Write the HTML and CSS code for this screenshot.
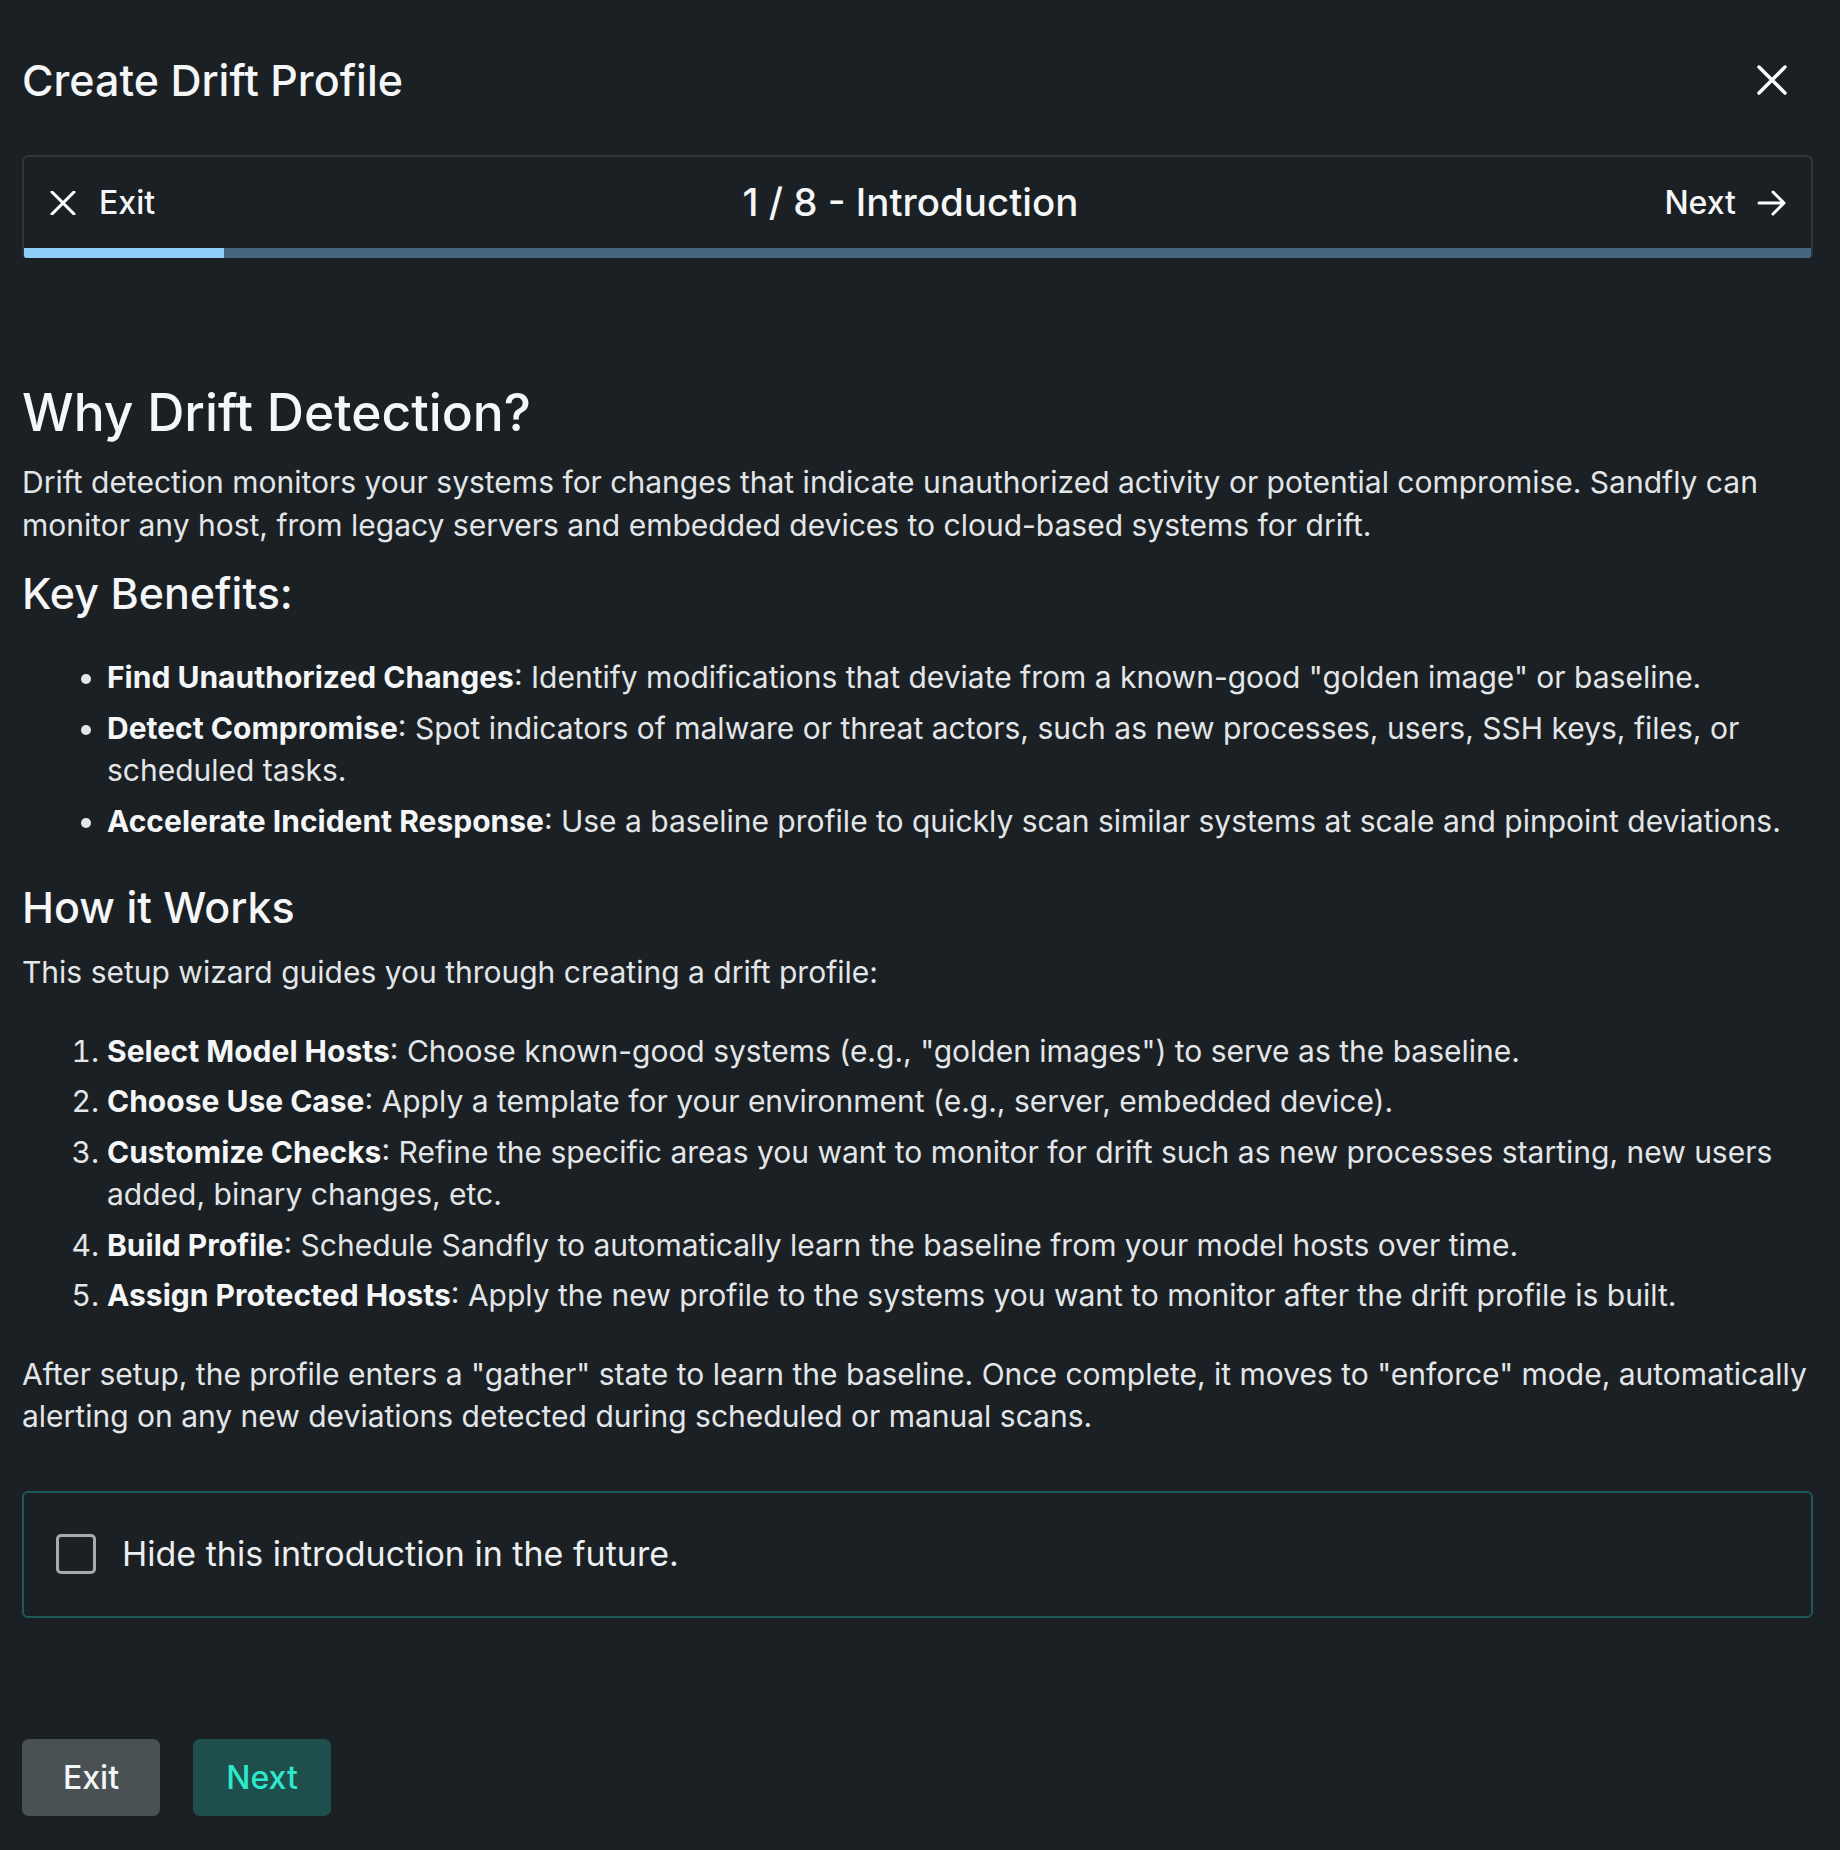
FILE: index.html
```html
<!DOCTYPE html>
<html lang="en">
<head>
<meta charset="utf-8">
<title>Create Drift Profile</title>
<link rel="stylesheet" href="styles.css">
</head>
<body>
<div class="modal">
  <header class="modal-header">
    <h1 class="modal-title">Create Drift Profile</h1>
    <button class="close-btn" aria-label="Close">
      <svg width="32" height="30" viewBox="0 0 32 30"><path d="M3 2 L29 28 M29 2 L3 28" stroke="#ffffff" stroke-width="3.4" stroke-linecap="round" fill="none"/></svg>
    </button>
  </header>

  <div class="stepper">
    <div class="stepper-row">
      <button class="step-link step-exit">
        <svg width="26" height="24" viewBox="0 0 26 24"><path d="M2 1 L24 23 M24 1 L2 23" stroke="#ffffff" stroke-width="3" stroke-linecap="round" fill="none"/></svg>
        <span>Exit</span>
      </button>
      <div class="step-title">1 / 8 - Introduction</div>
      <button class="step-link step-next">
        <span>Next</span>
        <svg width="30" height="26" viewBox="0 0 30 26"><path d="M2 13 H27 M16 2 L27 13 L16 24" stroke="#ffffff" stroke-width="3" stroke-linecap="round" stroke-linejoin="round" fill="none"/></svg>
      </button>
    </div>
    <div class="progress"><div class="progress-fill" style="width: 200px"></div></div>
  </div>

  <main class="content">
    <h2 class="h-main">Why Drift Detection?</h2>
    <p class="p-lead">Drift detection monitors your systems for changes that indicate unauthorized activity or potential compromise. Sandfly can monitor any host, from legacy servers and embedded devices to cloud-based systems for drift.</p>

    <h3 class="h-sub h-key">Key Benefits:</h3>
    <ul class="list list-key">
      <li><strong>Find Unauthorized Changes</strong>: Identify modifications that deviate from a known-good "golden image" or baseline.</li>
      <li><strong>Detect Compromise</strong>: Spot indicators of malware or threat actors, such as new processes, users, SSH keys, files, or scheduled tasks.</li>
      <li><strong>Accelerate Incident Response</strong>: Use a baseline profile to quickly scan similar systems at scale and pinpoint deviations.</li>
    </ul>

    <h3 class="h-sub h-how">How it Works</h3>
    <p class="p-how">This setup wizard guides you through creating a drift profile:</p>
    <ol class="list list-steps">
      <li><strong>Select Model Hosts</strong>: Choose known-good systems (e.g., "golden images") to serve as the baseline.</li>
      <li><strong>Choose Use Case</strong>: Apply a template for your environment (e.g., server, embedded device).</li>
      <li><strong>Customize Checks</strong>: Refine the specific areas you want to monitor for drift such as new processes starting, new users added, binary changes, etc.</li>
      <li><strong>Build Profile</strong>: Schedule Sandfly to automatically learn the baseline from your model hosts over time.</li>
      <li><strong>Assign Protected Hosts</strong>: Apply the new profile to the systems you want to monitor after the drift profile is built.</li>
    </ol>
    <p class="p-after">After setup, the profile enters a "gather" state to learn the baseline. Once complete, it moves to "enforce" mode, automatically alerting on any new deviations detected during scheduled or manual scans.</p>

    <label class="hide-box">
      <span class="checkbox"></span>
      <span class="hide-label">Hide this introduction in the future.</span>
    </label>
  </main>

  <footer class="actions">
    <button class="btn btn-exit">Exit</button>
    <button class="btn btn-next">Next</button>
  </footer>
</div>
</body>
</html>
```

FILE: styles.css
```css
* { box-sizing: border-box; }

html, body {
  margin: 0;
  padding: 0;
  background: #1b2024;
}

body {
  font-family: Inter, "Noto Sans", "Liberation Sans", sans-serif;
  color: #e3e6e8;
  font-size: 30px;
  line-height: 42.5px;
}

.modal {
  padding: 0 27px 0 22px;
  min-height: 1850px;
}

button {
  font-family: inherit;
  border: none;
  background: none;
  color: inherit;
  padding: 0;
  cursor: pointer;
}

.modal-header {
  display: flex;
  align-items: center;
  justify-content: space-between;
  padding-top: 56px;
  height: 104px;
  margin-bottom: 51px;
}

.modal-title {
  margin: 0;
  font-size: 43px;
  line-height: 48px;
  font-weight: 500;
  color: #f4f6f7;
}

.close-btn {
  display: flex;
  margin-right: 25px;
}

.stepper {
  border: 2px solid #2f363a;
  border-bottom: none;
  border-radius: 6px 6px 4px 4px;
  overflow: hidden;
}

.stepper-row {
  display: grid;
  grid-template-columns: 1fr auto 1fr;
  align-items: center;
  height: 91px;
  padding: 0 24px 0 26px;
}

.step-link {
  display: flex;
  align-items: center;
  gap: 23px;
  font-size: 32px;
  font-weight: 500;
  color: #f4f6f7;
}

.step-exit { justify-self: start; }
.step-next { justify-self: end; gap: 21px; }

.step-title {
  font-size: 38.5px;
  font-weight: 500;
  color: #f4f6f7;
  margin-right: 16px;
}

.progress {
  height: 10px;
  background: #44677f;
}

.progress-fill {
  height: 100%;
  background: #8ecdf5;
}

.content h2, .content h3, .content p, .content ul, .content ol {
  margin: 0;
}

.content .h-main {
  margin-top: 124px;
  font-size: 51.5px;
  line-height: 60px;
  font-weight: 500;
  color: #f4f6f7;
}

.content .p-lead { margin-top: 19px; }

.h-sub {
  font-size: 43px;
  line-height: 48px;
  font-weight: 500;
  color: #f4f6f7;
}

.content .h-key { margin-top: 23px; }
.content .h-how { margin-top: 41px; }

.list {
  padding-left: 85px;
}

.list li + li { margin-top: 8px; }

.list strong {
  font-weight: 700;
  color: #f4f6f7;
}

.content .list-key { margin-top: 39px; }

.content .p-how { margin-top: 20px; }

.content .list-steps { margin-top: 36px; }

.content .p-after { margin-top: 36px; }

.hide-box {
  display: flex;
  align-items: center;
  gap: 26px;
  margin-top: 53px;
  height: 127px;
  padding-left: 32px;
  border: 2px solid #1d5b57;
  border-radius: 6px;
}

.checkbox {
  width: 40px;
  height: 40px;
  border: 3px solid #a8abad;
  border-radius: 5px;
  flex: none;
}

.hide-label {
  font-size: 34px;
  color: #eceef0;
}

.actions {
  display: flex;
  gap: 33px;
  margin-top: 121px;
}

.btn {
  width: 138px;
  height: 77px;
  border-radius: 7px;
  font-size: 32px;
  font-weight: 500;
}

.btn-exit {
  background: #4a5155;
  color: #f4f6f7;
}

.btn-next {
  background: #1f4f4c;
  color: #2ee8cc;
}
```
